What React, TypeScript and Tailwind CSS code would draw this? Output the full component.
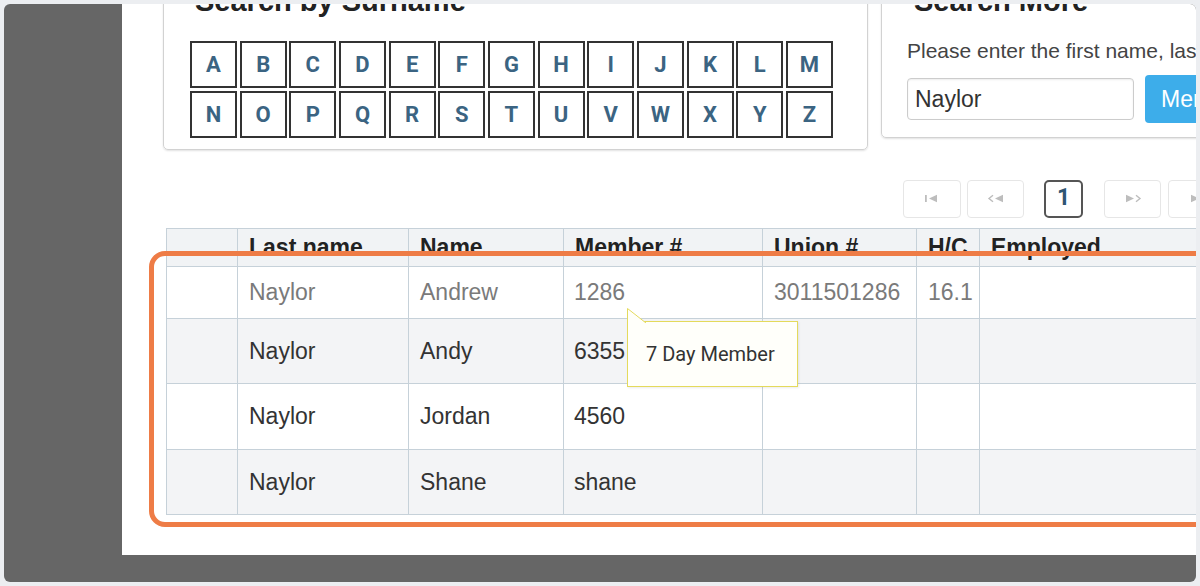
import React from 'react';

const letters = 'ABCDEFGHIJKLMNOPQRSTUVWXYZ'.split('');

const rows = [
    { last: 'Naylor', name: 'Andrew', member: '1286', union: '3011501286', hc: '16.1', muted: true, alt: false, h: 'h-[52px]' },
    { last: 'Naylor', name: 'Andy', member: '6355', union: '', hc: '', muted: false, alt: true, h: 'h-[65px]' },
    { last: 'Naylor', name: 'Jordan', member: '4560', union: '', hc: '', muted: false, alt: false, h: 'h-[66px]' },
    { last: 'Naylor', name: 'Shane', member: 'shane', union: '', hc: '', muted: false, alt: true, h: 'h-[65px]' },
];

function PagerIcon({ kind }: { kind: 'first' | 'prev' | 'next' | 'last' }) {
    return (
        <svg width="18" height="9" viewBox="0 0 18 9" fill="#bdbdbd" stroke="#bdbdbd">
            {kind === 'first' && (
                <>
                    <rect x="2" y="1" width="1.8" height="7" stroke="none" />
                    <path d="M6 4.5 L14 0.8 L14 8.2 Z" stroke="none" />
                </>
            )}
            {kind === 'prev' && (
                <>
                    <path d="M6 1.2 L2 4.5 L6 7.8" fill="none" strokeWidth="1.4" />
                    <path d="M8 4.5 L16 0.8 L16 8.2 Z" stroke="none" />
                </>
            )}
            {kind === 'next' && (
                <>
                    <path d="M2 0.8 L10 4.5 L2 8.2 Z" stroke="none" />
                    <path d="M12 1.2 L16 4.5 L12 7.8" fill="none" strokeWidth="1.4" />
                </>
            )}
            {kind === 'last' && (
                <>
                    <path d="M3 0.8 L11 4.5 L3 8.2 Z" stroke="none" />
                    <rect x="14" y="1" width="1.8" height="7" stroke="none" />
                </>
            )}
        </svg>
    );
}

export default function App() {
    return (
        <div className="h-[586px] w-[1200px] bg-[#eceef1] p-1 font-['Liberation_Sans',Arial,sans-serif]">
            <div className="flex h-full flex-col overflow-hidden rounded-[6px] bg-[#666666]">
                <div className="flex h-[551px] shrink-0">
                    <div className="w-[118px] shrink-0" />
                    <div className="relative flex-1 overflow-hidden bg-white">
                        <div className="-mt-[40px] pl-[41px]">
                            {/* search cards */}
                            <div className="flex items-start gap-[13px]">
                                <div className="w-[705px] shrink-0 rounded-[5px] border border-[#d2d2d2] px-[26px] pb-[11px] pt-[19px] shadow-[0_1px_2px_rgba(0,0,0,0.12)]">
                                    <h3 className="pl-[5px] text-[29px] font-bold leading-[34px] text-[#222]">Search by Surname</h3>
                                    <div className="mt-[23px] grid grid-cols-[repeat(13,47px)] gap-x-[2.67px] gap-y-[2.5px]">
                                        {letters.map((l) => (
                                            <div
                                                key={l}
                                                className="flex h-[47px] items-center justify-center border-2 border-[#333] font-['Roboto',sans-serif] text-[22px] font-bold text-[#3b6482]"
                                            >
                                                {l}
                                            </div>
                                        ))}
                                    </div>
                                </div>
                                <div className="w-[420px] shrink-0 rounded-[5px] border border-[#d2d2d2] pb-[14px] pl-[25px] pt-[19px] shadow-[0_1px_2px_rgba(0,0,0,0.12)]">
                                    <h3 className="pl-[7px] text-[29px] font-bold leading-[34px] text-[#222]">Search More</h3>
                                    <p className="mt-[21px] whitespace-nowrap text-[21px] leading-[24px] text-[#444]">
                                        Please enter the first name, last name or member number
                                    </p>
                                    <div className="mt-[12px] flex items-center gap-[11px]">
                                        <div className="flex h-[42px] w-[227px] shrink-0 items-center rounded-[4px] border border-[#cccccc] px-[7px] text-[23px] text-[#333] shadow-[inset_0_1px_2px_rgba(0,0,0,0.08)]">
                                            Naylor
                                        </div>
                                        <div className="flex h-[48px] shrink-0 items-center whitespace-nowrap rounded-[4px] bg-[#3dadea] px-[16px] text-[23px] text-white">
                                            Member Search
                                        </div>
                                    </div>
                                </div>
                            </div>

                            {/* pager */}
                            <div className="ml-[740px] mt-[30px] flex w-[400px] items-center">
                                <div className="flex h-[38px] w-[58px] shrink-0 items-center justify-center rounded-[4px] border border-[#e6e6e6]">
                                    <PagerIcon kind="first" />
                                </div>
                                <div className="ml-[6px] flex h-[38px] w-[57px] shrink-0 items-center justify-center rounded-[4px] border border-[#e6e6e6]">
                                    <PagerIcon kind="prev" />
                                </div>
                                <div className="ml-[20px] flex h-[38px] w-[39px] shrink-0 items-center justify-center rounded-[5px] border-2 border-[#555] font-['Roboto',sans-serif] text-[23px] font-bold text-[#2f5673]">
                                    1
                                </div>
                                <div className="ml-[21px] flex h-[38px] w-[57px] shrink-0 items-center justify-center rounded-[4px] border border-[#e6e6e6]">
                                    <PagerIcon kind="next" />
                                </div>
                                <div className="ml-[7px] flex h-[38px] w-[57px] shrink-0 items-center justify-center rounded-[4px] border border-[#e6e6e6]">
                                    <PagerIcon kind="last" />
                                </div>
                            </div>

                            {/* results */}
                            <div className="relative ml-[3px] mt-[10px]">
                                <table className="w-[1120px] table-fixed border-collapse text-[23px]">
                                    <colgroup>
                                        <col className="w-[71px]" />
                                        <col className="w-[171px]" />
                                        <col className="w-[155px]" />
                                        <col className="w-[199px]" />
                                        <col className="w-[154px]" />
                                        <col className="w-[63px]" />
                                        <col />
                                    </colgroup>
                                    <thead>
                                        <tr className="bg-[#f1f3f5] text-left text-[#222]">
                                            {['', 'Last name', 'Name', 'Member #', 'Union #', 'H/C', 'Employed'].map((h, i) => (
                                                <th
                                                    key={i}
                                                    className="h-[38px] whitespace-nowrap border border-[#c6d1d9] px-[11px] pb-[5px] pt-[4px] align-top font-bold leading-[28px]"
                                                >
                                                    {h}
                                                </th>
                                            ))}
                                        </tr>
                                    </thead>
                                    <tbody>
                                        {rows.map((r) => (
                                            <tr
                                                key={r.name}
                                                className={`${r.h} ${r.alt ? 'bg-[#f3f4f6]' : 'bg-white'} ${r.muted ? 'text-[#7a7a7a]' : 'text-[#333]'}`}
                                            >
                                                <td className="border border-[#c6d1d9]" />
                                                <td className="border border-[#c6d1d9] px-[11px] leading-[28px]">{r.last}</td>
                                                <td className="border border-[#c6d1d9] px-[11px] leading-[28px]">{r.name}</td>
                                                <td className="border border-[#c6d1d9] px-[10px] leading-[28px]">{r.member}</td>
                                                <td className="border border-[#c6d1d9] px-[11px] leading-[28px]">{r.union}</td>
                                                <td className="border border-[#c6d1d9] px-[11px] leading-[28px]">{r.hc}</td>
                                                <td className="border border-[#c6d1d9]" />
                                            </tr>
                                        ))}
                                    </tbody>
                                </table>

                                {/* highlight */}
                                <div className="pointer-events-none absolute left-[-17px] top-[23px] h-[276px] w-[1080px] rounded-[16px] border-[5px] border-[#ee7c46]" />

                                {/* tooltip */}
                                <div className="absolute left-[461px] top-[93px] flex h-[66px] w-[171px] items-center border border-[#e4da5c] bg-[#fffffa] pl-[18px] font-['Roboto',sans-serif] text-[20px] text-[#333] shadow-[1px_1px_2px_rgba(0,0,0,0.08)]">
                                    <svg className="absolute left-[-1px] top-[-14px]" width="20" height="15" viewBox="0 0 20 15">
                                        <path d="M0.5 15 L0.5 0.5 L19 15" fill="#fffffa" stroke="#e4da5c" strokeWidth="1" />
                                    </svg>
                                    7 Day Member
                                </div>
                            </div>
                        </div>
                    </div>
                </div>
            </div>
        </div>
    );
}
